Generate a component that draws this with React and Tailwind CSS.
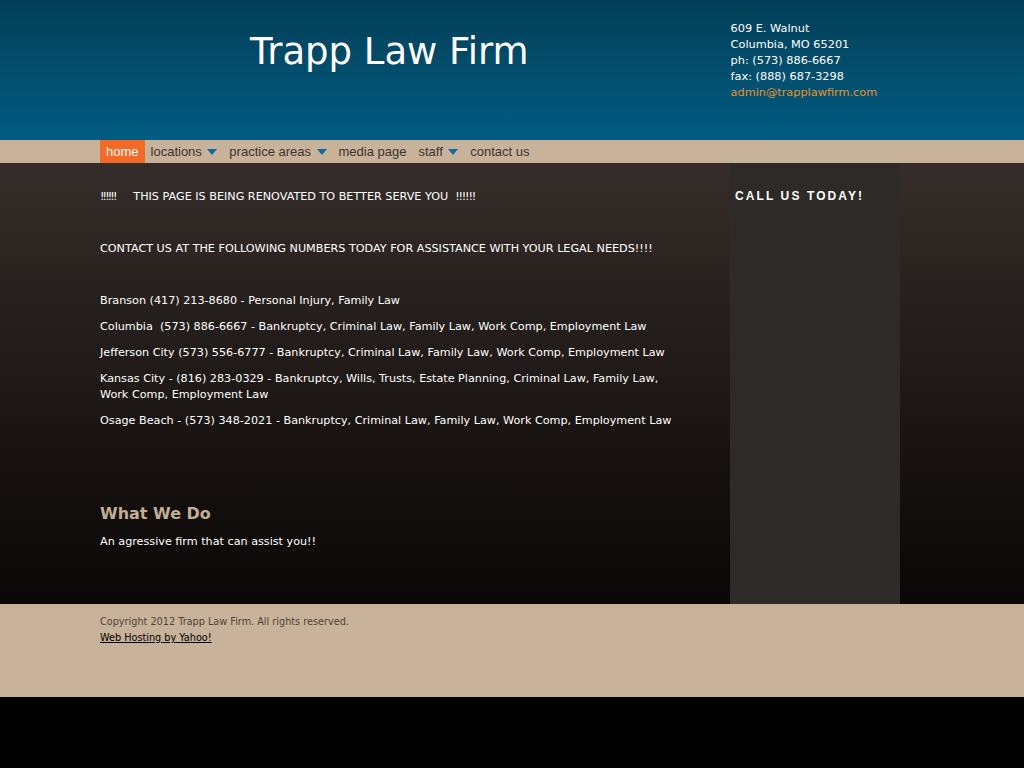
import React from 'react';

const NAV = [
  { label: 'home', active: true },
  { label: 'locations', drop: true },
  { label: 'practice areas', drop: true },
  { label: 'media page' },
  { label: 'staff', drop: true },
  { label: 'contact us' },
];

const OFFICES = [
  'Branson (417) 213-8680 - Personal Injury, Family Law',
  'Columbia\u00a0 (573) 886-6667 - Bankruptcy, Criminal Law, Family Law, Work Comp, Employment Law',
  'Jefferson City (573) 556-6777 - Bankruptcy, Criminal Law, Family Law, Work Comp, Employment Law',
  'Kansas City - (816) 283-0329 - Bankruptcy, Wills, Trusts, Estate Planning, Criminal Law, Family Law, Work Comp, Employment Law',
  'Osage Beach - (573) 348-2021 - Bankruptcy, Criminal Law, Family Law, Work Comp, Employment Law',
];

const Caret = () => (
  <svg width="10" height="6" viewBox="0 0 10 6" className="ml-[5.5px] mt-[1px]">
    <path d="M0 0 L10 0 L5 6 Z" fill="#0a6d9e" />
  </svg>
);

export default function App() {
  return (
    <div className="min-h-[768px] bg-black font-['DejaVu_Sans',sans-serif]">
      <header className="h-[140px] bg-gradient-to-b from-[#033f57] to-[#015c82]">
        <div className="flex">
          <h1 className="ml-[250px] mt-[30px] text-[37px] leading-[44px] text-white">Trapp Law Firm</h1>
          <div className="ml-[202px] mt-[21px] text-[11.3px] leading-[16px] text-white">
            <p>609 E. Walnut</p>
            <p>Columbia, MO 65201</p>
            <p>ph: (573) 886-6667</p>
            <p>fax: (888) 687-3298</p>
            <p className="text-[#e8922e]">admin@trapplawfirm.com</p>
          </div>
        </div>
      </header>

      <nav className="h-[23px] bg-[#c8b29a] font-['Liberation_Sans',sans-serif] text-[13px]">
        <ul className="ml-[100px] flex h-full">
          {NAV.map((n) => (
            <li
              key={n.label}
              className={`flex h-full items-center px-[6px] ${n.active ? 'bg-[#f26a25] text-white' : 'text-[#3b3431]'}`}
            >
              {n.label}
              {n.drop && <Caret />}
            </li>
          ))}
        </ul>
      </nav>

      <main className="h-[441px] bg-gradient-to-b from-[#352d2a] to-[#0a0706]">
        <div className="ml-[100px] flex h-full">
          <div className="w-[600px] pt-[26px] text-[11.2px] leading-[16px] text-white">
            <p className="mb-[10px]">
              <span className="tracking-[-1.9px]">!!!!!!</span>&nbsp;&nbsp;&nbsp;&nbsp; THIS PAGE IS BEING RENOVATED TO BETTER SERVE YOU&nbsp;{' '}
              <span className="tracking-[-1.2px]">!!!!!!</span>
            </p>
            <p className="mb-[10px]">&nbsp;</p>
            <p className="mb-[10px]">CONTACT US AT THE FOLLOWING NUMBERS TODAY FOR ASSISTANCE WITH YOUR LEGAL NEEDS!!!!</p>
            <p className="mb-[10px]">&nbsp;</p>
            {OFFICES.map((o) => (
              <p key={o} className="mb-[10px] pr-[10px]">{o}</p>
            ))}
            <h2 className="mt-[74px] text-[16px] leading-[22px] font-bold text-[#c3ae94]">What We Do</h2>
            <p className="mt-[9px]">An agressive firm that can assist you!!</p>
          </div>
          <aside className="ml-[30px] h-full w-[170px] bg-[#2d2a28] pl-[5px] pt-[24px]">
            <h3 className="font-['Liberation_Sans',sans-serif] text-[12px] font-bold tracking-[2.1px] text-white">CALL US TODAY!</h3>
          </aside>
        </div>
      </main>

      <footer className="h-[93px] bg-[#c8b29a] pt-[10px] text-[9.7px] leading-[16px]">
        <div className="ml-[100px]">
          <p className="text-[#4f453d]">Copyright 2012 Trapp Law Firm. All rights reserved.</p>
          <a href="#" className="text-black underline">Web Hosting by Yahoo!</a>
        </div>
      </footer>
    </div>
  );
}
